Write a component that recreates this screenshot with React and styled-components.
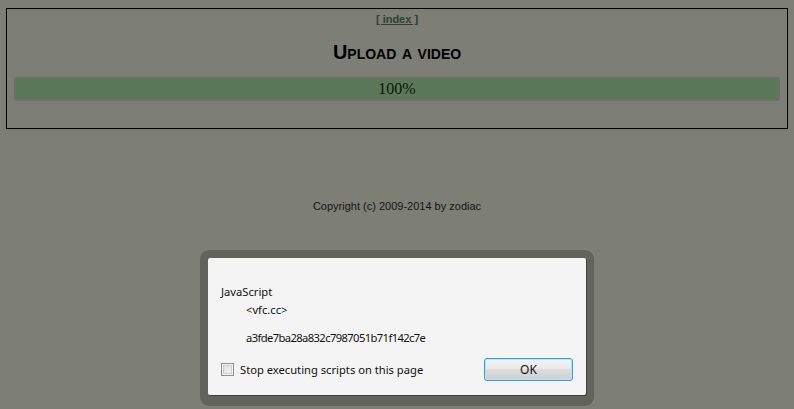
import React from "react";
import styled, { createGlobalStyle } from "styled-components";

const Global = createGlobalStyle`
  html, body { margin: 0; padding: 0; background: #7d7e76; }
  body { font-family: "Liberation Sans", Arial, sans-serif; height: 409px; overflow: hidden; }
`;

const Page = styled.div`
  position: relative;
  padding: 8px 6px 0 6px;
  height: 409px;
  box-sizing: border-box;
`;

const Box = styled.div`
  border: 1px solid #000;
  height: 121px;
  padding: 4px 7px 0 7px;
  box-sizing: border-box;
  display: flex;
  flex-direction: column;
  align-items: center;
`;

const IndexLink = styled.a`
  font-size: 11px;
  font-weight: bold;
  color: #2f3f33;
  text-decoration: underline;
  line-height: 13px;
`;

const Title = styled.h1`
  margin: 15px 0 0 0;
  font-size: 20px;
  font-variant: small-caps;
  font-weight: bold;
  color: #000;
  line-height: 22px;
`;

const Progress = styled.div`
  margin-top: 14px;
  width: 100%;
  height: 24px;
  box-sizing: border-box;
  border: 2px solid #6e6f68;
  border-radius: 3px;
  background: #5b7958;
  display: flex;
  align-items: center;
  justify-content: center;
  font-family: "Liberation Serif", "Times New Roman", serif;
  font-size: 16px;
  color: #111;
`;

const Copyright = styled.div`
  margin-top: 71px;
  text-align: center;
  font-size: 11px;
  color: #161616;
  line-height: 13px;
`;

const Frame = styled.div`
  position: absolute;
  left: 200px;
  top: 250px;
  width: 394px;
  height: 156px;
  padding: 8px;
  box-sizing: border-box;
  background: #62635c;
  border-radius: 9px;
`;

const Panel = styled.div`
  width: 378px;
  height: 137px;
  background: #f4f4f4;
  border-radius: 2px;
  box-shadow: 1px 1px 0 #3d3e39;
  box-sizing: border-box;
  padding: 26px 13px 0 13px;
  font-family: "Noto Sans", "DejaVu Sans", sans-serif;
  font-size: 11.2px;
  color: #111;
  display: flex;
  flex-direction: column;
`;

const Line = styled.div`
  line-height: 16px;
  margin-top: ${p => p.$gap || 0}px;
  padding-left: ${p => (p.$indent ? 25 : 0)}px;
  letter-spacing: ${p => p.$tight ? "-0.6px" : "0"};
`;

const Footer = styled.div`
  margin-top: 12px;
  display: flex;
  align-items: center;
  justify-content: space-between;
`;

const CheckLabel = styled.label`
  display: flex;
  align-items: center;
  gap: 6px;
`;

const Check = styled.span`
  width: 13px;
  height: 13px;
  box-sizing: border-box;
  border: 1px solid #8f8f8f;
  background: linear-gradient(135deg, #dcdcdc, #f6f6f6);
  box-shadow: inset 0 0 0 1px #f4f4f4, inset 0 0 0 2px #cfcfcf;
`;

const OkButton = styled.button`
  width: 89px;
  height: 23px;
  border: 1px solid #3c9bd6;
  border-radius: 3px;
  background: linear-gradient(#f2f2f2 0%, #ebebeb 45%, #dddddd 50%, #cfcfcf 100%);
  box-shadow: inset 0 0 0 1px #b5e4f7;
  font-family: "Noto Sans", "DejaVu Sans", sans-serif;
  font-size: 12px;
  color: #111;
  padding: 0;
`;

export default function App() {
  return (
    <Page>
      <Global />
      <Box>
        <IndexLink href="#">[ index ]</IndexLink>
        <Title>Upload a video</Title>
        <Progress>100%</Progress>
      </Box>
      <Copyright>Copyright (c) 2009-2014 by zodiac</Copyright>
      <Frame>
        <Panel>
          <Line>JavaScript</Line>
          <Line $indent $gap={2}>&lt;vfc.cc&gt;</Line>
          <Line $indent $tight $gap={12}>a3fde7ba28a832c7987051b71f142c7e</Line>
          <Footer>
            <CheckLabel>
              <Check />
              Stop executing scripts on this page
            </CheckLabel>
            <OkButton>OK</OkButton>
          </Footer>
        </Panel>
      </Frame>
    </Page>
  );
}
